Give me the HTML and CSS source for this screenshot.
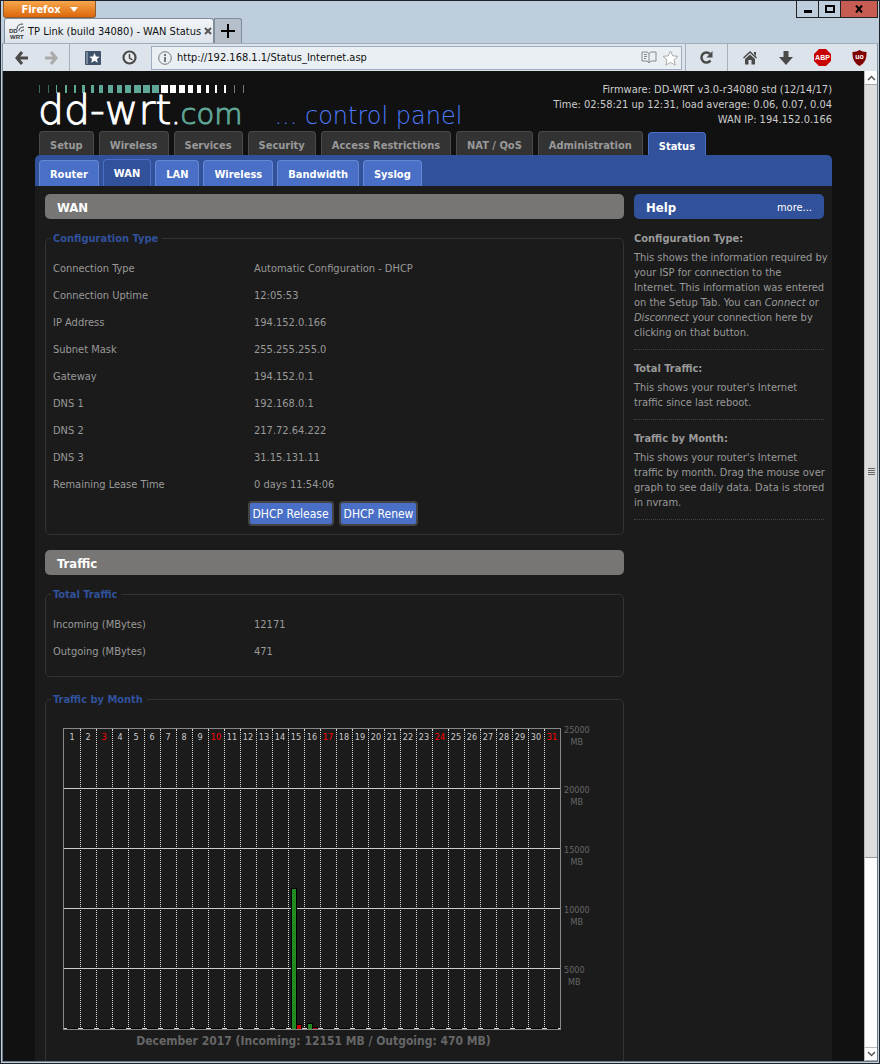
FILE: index.html
```html
<!DOCTYPE html>
<html lang="en">
<head>
    <meta charset="utf-8">
    <title>TP Link (build 34080) - WAN Status</title>
    <link rel="stylesheet" href="styles.css">
</head>
<body>
<div class="window">
    <div class="titlebar">
        <button class="firefox">Firefox <svg width="8" height="5" viewBox="0 0 8 5"><path d="M0 0h8L4 5z" fill="#fff"/></svg></button>
        <div class="controls">
            <button aria-label="Minimize"><svg width="10" height="8"><path d="M1 5h8v3H1z"/></svg></button>
            <button aria-label="Maximize"><svg width="10" height="8"><path d="M1 1h8v6H1z" fill="none" stroke="#000" stroke-width="2"/></svg></button>
            <button class="close" aria-label="Close"><svg width="8" height="8"><path d="M1 .5l6 7M7 .5l-6 7" stroke="#000" stroke-width="2"/></svg></button>
        </div>
    </div>
    <div class="tabs">
        <div class="tab">
            <svg width="16" height="16" viewBox="0 0 16 16"><g font-family="Liberation Sans" font-weight="bold" font-size="6" fill="#333"><text x="0" y="10">DD</text><text x="1" y="16">WRT</text></g><path d="M8 6q0-5 6-5M10 8q0-4 5-4M12 9q0-2 3-2" fill="none" stroke="#444"/></svg>
            <span>TP Link (build 34080) - WAN Status</span>
            <button class="tab-close" aria-label="Close tab"><svg width="8" height="8"><path d="M1 1l6 6M7 1L1 7" stroke="#555" stroke-width="2"/></svg></button>
        </div>
        <button class="new-tab" aria-label="New tab"><svg width="14" height="14"><path d="M7 0v14M0 7h14" stroke="#000" stroke-width="2"/></svg></button>
    </div>
    <div class="toolbar">
        <div class="group">
            <button aria-label="Back"><svg width="14" height="14" viewBox="0 0 14 14"><path d="M7 1L2 7l5 6M2 7h11" fill="none" stroke="#4a4a4a" stroke-width="3"/></svg></button>
            <button aria-label="Forward"><svg width="14" height="14" viewBox="0 0 14 14"><path d="M7 1l5 6-5 6M12 7H1" fill="none" stroke="#aaa" stroke-width="3"/></svg></button>
        </div>
        <div class="group marks">
            <button aria-label="Bookmarks"><svg width="16" height="14" viewBox="0 0 16 14"><rect width="16" height="14" rx="1" fill="#40536a"/><path d="M1 1h2v12H1z" fill="#7b8a9b"/><path d="M9.500 2l1.500 3.400 3.700.3-2.800 2.400.9 3.700-3.300-2-3.300 2 .9-3.700-2.800-2.400 3.700-.3z" fill="#fff"/></svg></button>
            <button aria-label="History"><svg width="15" height="15" viewBox="0 0 15 15"><circle cx="7.500" cy="7.500" r="6" fill="#e6ebef" stroke="#4a4a4a" stroke-width="2.200"/><path d="M7.500 4v4l3 2" fill="none" stroke="#4a4a4a" stroke-width="1.500"/></svg></button>
        </div>
        <div class="urlbar">
            <svg width="14" height="14" viewBox="0 0 14 14"><circle cx="7" cy="7" r="6.300" fill="none" stroke="#777"/><path d="M6 3h2v2H6zM6 6h2v5H6z" fill="#777"/></svg>
            <input type="text" aria-label="Address" value="http://192.168.1.1/Status_Internet.asp">
            <svg width="16" height="13" viewBox="0 0 16 13"><path d="M1 1h5l2 1.500L10 1h5v9h-5l-2 2-2-2H1zM8 2.500V11M3 3.500h3M3 5.500h3M3 7.500h2" fill="none" stroke="#8a8a8a"/></svg>
            <svg width="17" height="16" viewBox="0 0 17 16"><path d="M8.500 1l2.200 4.800 5.300.6-3.900 3.500 1.100 5.200-4.700-2.700-4.700 2.700 1.100-5.200L1 6.400l5.300-.6z" fill="#fff" stroke="#aaa"/></svg>
        </div>
        <div class="group reload">
            <button aria-label="Reload"><svg width="15" height="15" viewBox="0 0 15 15"><path d="M11.500 10.500A5 5 0 1 1 11 4" fill="none" stroke="#4a4a4a" stroke-width="2.500"/><path d="M13.500 1v6.500H7.500z" fill="#4a4a4a"/></svg></button>
        </div>
        <div class="group addons">
            <button aria-label="Home"><svg width="16" height="15" viewBox="0 0 16 15"><path d="M8 1l7 6.500-1 1-6-5.500-6 5.500-1-1zM12 2h2v4l-2-2zM3 9l5-4.500L13 9v5.500H9.500V10h-3v4.500H3z" fill="#4a4a4a"/></svg></button>
            <button aria-label="Downloads"><svg width="14" height="14" viewBox="0 0 14 14"><path d="M4.500 0h5v6H14l-7 8-7-8h4.500z" fill="#4a4a4a"/></svg></button>
            <button aria-label="Adblock Plus"><svg width="17" height="17" viewBox="0 0 17 17"><path d="M5 0h7l5 5v7l-5 5H5l-5-5V5z" fill="#c90000"/><text x="8.500" y="11" text-anchor="middle" font-family="Liberation Sans" font-weight="bold" font-size="7" fill="#fff">ABP</text></svg></button>
            <button aria-label="uBlock"><svg width="15" height="16" viewBox="0 0 15 16"><path d="M7.500 0Q10 2 14.500 2q.6 10-7 14Q-.1 12 .5 2 5 2 7.500 0z" fill="#800000"/><text x="7.500" y="9" text-anchor="middle" font-family="Liberation Sans" font-weight="bold" font-size="7" fill="#fff">uo</text></svg></button>
        </div>
    </div>
    <div class="view">
        <div class="page">
            <div class="wrapper">
                <header class="header">
                    <div class="brand">
                        <svg width="208" height="9" viewBox="0 0 208 9">
                            <path fill="#5fa797" d="M18 0h1v8h-1zM27 0h2v8h-2zM36 0h2v8h-2zM44 0h3v8h-3zM53 0h3v8h-3zM61 0h4v8h-4zM70 0h5v8h-5zM79 0h5v8h-5zM87 0h6v8h-6zM96 0h7v8h-7zM105 0h7v8h-7zM114 0h7v8h-7z"/>
                            <path fill="#3c6b60" d="M1 0h1v8H1zM10 0h1v8h-1z"/>
                            <path fill="#fff" d="M123 0h7v8h-7zM132 0h6v8h-6zM141 0h6v8h-6zM150 0h5v8h-5zM159 0h4v8h-4zM168 0h3v8h-3zM177 0h2v8h-2zM186 0h2v8h-2z"/>
                            <path fill="#777" d="M196 0h1v8h-1zM205 0h1v8h-1z"/>
                        </svg>
                        <div class="brand-name">
                            <h1>dd-wrt<span class="com"><span class="dot">.</span>com</span></h1>
                            <span class="panel">... control panel</span>
                        </div>
                    </div>
                    <div class="info">
                        <div>Firmware: DD-WRT v3.0-r34080 std (12/14/17)</div>
                        <div>Time: 02:58:21 up 12:31, load average: 0.06, 0.07, 0.04</div>
                        <div>WAN IP: 194.152.0.166</div>
                    </div>
                </header>
                <nav class="menu">
                    <a href="#">Setup</a>
                    <a href="#">Wireless</a>
                    <a href="#">Services</a>
                    <a href="#">Security</a>
                    <a href="#">Access Restrictions</a>
                    <a href="#">NAT / QoS</a>
                    <a href="#">Administration</a>
                    <a href="#" class="current">Status</a>
                </nav>
                <nav class="submenu">
                    <a href="#">Router</a>
                    <a href="#" class="current">WAN</a>
                    <a href="#">LAN</a>
                    <a href="#">Wireless</a>
                    <a href="#">Bandwidth</a>
                    <a href="#">Syslog</a>
                </nav>
                <div class="main">
                    <div class="contents">
                        <h2>WAN</h2>
                        <fieldset>
                            <legend>Configuration Type</legend>
                            <table class="settings">
                                <tr><th scope="row">Connection Type</th><td>Automatic Configuration - DHCP</td></tr>
                                <tr><th scope="row">Connection Uptime</th><td>12:05:53</td></tr>
                                <tr><th scope="row">IP Address</th><td>194.152.0.166</td></tr>
                                <tr><th scope="row">Subnet Mask</th><td>255.255.255.0</td></tr>
                                <tr><th scope="row">Gateway</th><td>194.152.0.1</td></tr>
                                <tr><th scope="row">DNS 1</th><td>192.168.0.1</td></tr>
                                <tr><th scope="row">DNS 2</th><td>217.72.64.222</td></tr>
                                <tr><th scope="row">DNS 3</th><td>31.15.131.11</td></tr>
                                <tr><th scope="row">Remaining Lease Time</th><td>0 days 11:54:06</td></tr>
                            </table>
                            <div class="buttons">
                                <button>DHCP Release</button>
                                <button>DHCP Renew</button>
                            </div>
                        </fieldset>
                        <h2>Traffic</h2>
                        <fieldset>
                            <legend>Total Traffic</legend>
                            <table class="settings">
                                <tr><th scope="row">Incoming (MBytes)</th><td>12171</td></tr>
                                <tr><th scope="row">Outgoing (MBytes)</th><td>471</td></tr>
                            </table>
                        </fieldset>
                        <fieldset class="month">
                            <legend>Traffic by Month</legend>
                            <div class="graph">
                                <div class="days" id="days"></div>
                                <ul class="scale">
                                    <li>25000<br>MB</li>
                                    <li>20000<br>MB</li>
                                    <li>15000<br>MB</li>
                                    <li>10000<br>MB</li>
                                    <li>5000<br>MB</li>
                                </ul>
                            </div>
                            <p class="caption">December 2017 (Incoming: 12151 MB / Outgoing: 470 MB)</p>
                        </fieldset>
                    </div>
                    <aside class="help">
                        <h2>Help <a href="#">more...</a></h2>
                        <section>
                            <h3>Configuration Type:</h3>
                            <p>
                                This shows the information required by<br>
                                your ISP for connection to the<br>
                                Internet. This information was entered<br>
                                on the Setup Tab. You can <i>Connect</i> or<br>
                                <i>Disconnect</i> your connection here by<br>
                                clicking on that button.
                            </p>
                        </section>
                        <section>
                            <h3>Total Traffic:</h3>
                            <p>
                                This shows your router's Internet<br>
                                traffic since last reboot.
                            </p>
                        </section>
                        <section>
                            <h3>Traffic by Month:</h3>
                            <p>
                                This shows your router's Internet<br>
                                traffic by month. Drag the mouse over<br>
                                graph to see daily data. Data is stored<br>
                                in nvram.
                            </p>
                        </section>
                    </aside>
                </div>
            </div>
        </div>
        <div class="scrollbar">
            <button aria-label="Scroll up"><svg width="9" height="6"><path d="M1 5l3.500-3.500L8 5" fill="none" stroke="#555" stroke-width="1.500"/></svg></button>
            <div class="thumb"><span></span></div>
            <div class="track"></div>
            <button aria-label="Scroll down"><svg width="9" height="6"><path d="M1 1l3.500 3.500L8 1" fill="none" stroke="#555" stroke-width="1.500"/></svg></button>
        </div>
    </div>
</div>

<script>
    const scaleMax = 25000;
    // MB per day as [incoming, outgoing], days not listed are empty
    const traffic = { 15: [11700, 350], 16: [451, 120] };
    const days = document.getElementById('days');

    for (let d = 1; d <= 31; d++) {
        const [incoming, outgoing] = traffic[d] || [0, 0];
        const col = document.createElement('div');
        // sundays are printed in red
        col.className = d % 7 === 3 ? 'day sunday' : 'day';
        col.innerHTML = '<span>' + d + '</span>' +
            '<div class="bars">' +
            '<div class="bar in" style="height:' + (incoming / scaleMax * 100) + '%"></div>' +
            '<div class="bar out" style="height:' + (outgoing / scaleMax * 100) + '%"></div>' +
            '</div>';
        days.appendChild(col);
    }
</script>
</body>
</html>
```
FILE: styles.css
```css
* {
    box-sizing: border-box;
}

body {
    margin: 0;
    font-family: "DejaVu Sans Condensed", "DejaVu Sans", sans-serif;
    font-size: 11px;
    line-height: 15px;
    color: #999;
    background: #111;
}

button {
    font-family: inherit;
    padding: 0;
    border: 0;
    background: none;
}

svg {
    display: block;
    flex: none;
}

a {
    color: inherit;
    text-decoration: none;
}

/* browser window */
.window {
    display: flex;
    flex-direction: column;
    height: 100vh;
    border: 1px solid #1b222a;
    padding: 0 1px 1px;
    background: #bfcedd;
}

.titlebar {
    display: flex;
    justify-content: space-between;
    height: 17px;
    padding-left: 1px;
}

.firefox {
    display: flex;
    align-items: center;
    justify-content: center;
    gap: 9px;
    width: 93px;
    border: 1px solid #8c5a2c;
    border-top: 0;
    border-radius: 0 0 3px 3px;
    background: linear-gradient(#f6a64c, #dc670b);
    color: #fff;
    font-size: 11px;
    font-weight: bold;
}

.controls {
    display: flex;
    border: 1px solid #222;
    border-top: 0;
}

.controls button {
    display: flex;
    align-items: center;
    justify-content: center;
    width: 22px;
    border-right: 1px solid #222;
}

.controls .close {
    width: 36px;
    border: 0;
    background: #c75c52;
}

.tabs {
    display: flex;
    height: 25px;
    padding-left: 2px;
}

.tab {
    display: flex;
    align-items: center;
    gap: 3px;
    width: 210px;
    padding: 0 4px;
    border: 1px solid #7e8d9c;
    border-bottom: 0;
    border-radius: 3px 3px 0 0;
    background: linear-gradient(#f2f5f7, #dce3ea);
    color: #111;
    white-space: nowrap;
}

.tab-close {
    margin-left: auto;
}

.new-tab {
    display: flex;
    align-items: center;
    justify-content: center;
    width: 28px;
    border: 1px solid #7e8d9c;
    border-bottom: 0;
    border-radius: 0 3px 0 0;
    background: #b5bfc9;
}

.toolbar {
    display: flex;
    align-items: center;
    height: 28px;
    border: 1px solid #8494a4;
    border-top-color: #a0adba;
    border-bottom: 0;
    background: #dce3ea;
}

.group {
    display: flex;
    align-items: center;
    justify-content: space-around;
    width: 67px;
    height: 100%;
    padding: 0 4px;
    border-right: 1px solid #a5b0bb;
}

.marks {
    width: 81px;
    border: 0;
}

.urlbar {
    display: flex;
    align-items: center;
    gap: 5px;
    flex: 1;
    height: 24px;
    padding: 0 2px 0 6px;
    border: 1px solid #9fadc0;
    background: #e9eff3;
}

.urlbar input {
    flex: 1;
    min-width: 0;
    padding: 0;
    border: 0;
    outline: 0;
    background: none;
    font: 11px "DejaVu Sans Condensed", "DejaVu Sans", sans-serif;
    color: #111;
}

.reload {
    width: 43px;
    margin-left: 3px;
    border-left: 1px solid #a5b0bb;
}

.addons {
    width: 149px;
    padding: 0 0 0 4px;
    border: 0;
}

.view {
    display: flex;
    flex: 1;
    min-height: 0;
    border: 1px solid #6c7c8c;
    border-top: 0;
    background: #111;
}

.page {
    flex: 1;
    display: flex;
    overflow: hidden;
}

.scrollbar {
    display: flex;
    flex-direction: column;
    width: 13px;
    border-left: 1px solid #bbb;
    background: #fff;
}

.scrollbar button {
    display: flex;
    align-items: center;
    justify-content: center;
    height: 14px;
    border-bottom: 1px solid #aaa;
}

.scrollbar button:last-child {
    border-top: 1px solid #bbb;
}

.thumb {
    display: flex;
    align-items: center;
    justify-content: center;
    flex: 773;
    border-bottom: 1px solid #999;
    background: #ddd;
}

.thumb span {
    width: 7px;
    height: 7px;
    background: repeating-linear-gradient(#666 0 1px, transparent 1px 2px);
}

.track {
    flex: 189;
}

/* router page */
.wrapper {
    width: 797px;
    max-width: 100%;
    margin: 0 auto;
}

.header {
    display: flex;
    justify-content: space-between;
    height: 60px;
    padding-top: 11px;
    color: #ccc;
}

.brand {
    padding: 3px 0 0 3px;
}

.brand-name {
    display: flex;
    align-items: baseline;
    gap: 32px;
    height: 33px;
    line-height: 33px;
    font-family: "DejaVu Sans Light", "DejaVu Sans", sans-serif;
    font-weight: 200;
    white-space: nowrap;
}

h1 {
    margin: 0;
    font-size: 41px;
    font-weight: 200;
    color: #fff;
    -webkit-text-stroke: 1px #fff;
}

.com {
    font-size: 29px;
    color: #5fa797;
    -webkit-text-stroke: 1px #5fa797;
}

.dot {
    color: #fff;
    -webkit-text-stroke: 1px #fff;
}

.panel {
    font-size: 24px;
    color: #4d7dff;
}

.info {
    text-align: right;
    white-space: nowrap;
}

.menu,
.submenu {
    display: flex;
    align-items: flex-end;
    gap: 5px;
    padding: 0 4px;
    font-weight: bold;
    white-space: nowrap;
}

.menu a {
    height: 24px;
    padding: 6px 10px 0;
    border: 1px solid #4a4a4a;
    border-bottom: 0;
    border-radius: 4px 4px 0 0;
    background: #333;
}

.menu .current {
    height: 23px;
    background: #31519b;
    border-color: #4a6fc6;
    color: #fff;
}

.submenu {
    gap: 4px;
    height: 31px;
    border-radius: 5px 5px 0 0;
    background: #31519b;
    color: #fff;
}

.submenu a {
    height: 26px;
    padding: 6px 10px 0;
    border: 1px solid #6687d2;
    border-bottom: 0;
    border-radius: 4px 4px 0 0;
    background: #4a6fc6;
}

.submenu .current {
    height: 27px;
    background: #31519b;
    border-color: #4a6fc6;
}

.main {
    display: flex;
    gap: 10px;
    padding: 8px 8px 0 10px;
    background: #1b1b1b;
}

.contents {
    flex: 1;
    min-width: 0;
}

h2 {
    display: flex;
    align-items: center;
    justify-content: space-between;
    height: 25px;
    margin: 0 0 12px;
    padding: 1px 12px 0;
    border-radius: 5px;
    background: #787674;
    color: #fff;
    font-size: 13px;
}

fieldset {
    min-width: 0;
    margin: 0 0 15px;
    padding: 9px 6px 8px;
    border: 1px solid #333;
    border-radius: 5px;
}

legend {
    padding: 0 4px 0 2px;
    margin-left: -1px;
    font-weight: bold;
    color: #31519b;
}

.settings {
    width: 100%;
    border-collapse: collapse;
}

.settings:last-child {
    margin-bottom: 3px;
}

.settings th,
.settings td {
    height: 27px;
    padding: 0 1px;
    font-weight: normal;
    text-align: left;
}

.settings th {
    width: 201px;
}

.buttons {
    display: flex;
    justify-content: center;
    gap: 5px;
    padding: 3px 3px 0 0;
}

.buttons button {
    height: 25px;
    padding: 0 3px;
    border: 2px solid #444;
    border-radius: 4px;
    background: #4a6fc6;
    color: #fff;
    font-size: 12px;
}

.month {
    margin-bottom: 0;
}

.graph {
    display: flex;
    gap: 3px;
    padding: 12px 0 0 11px;
}

.days {
    display: grid;
    grid-template-columns: repeat(31, 16px);
    height: 302px;
    border: 1px solid #888;
    background: repeating-linear-gradient(transparent 0 59px, #ccc 59px 60px);
}

.day {
    position: relative;
    padding-right: 1px;
    border-left: 1px dotted #ddd;
    font-size: 9px;
    line-height: 17px;
    text-align: center;
    color: #ccc;
}

.day:first-child {
    border-left-color: transparent;
}

.sunday {
    color: #f00;
}

/* lies over the day number and the grid lines */
.bars {
    position: absolute;
    inset: 0 2px;
    display: flex;
    align-items: flex-end;
}

.bar {
    box-sizing: content-box;
    width: 4px;
    border: 1px solid #000;
    border-bottom: 0;
}

.in {
    background: #228b22;
}

.out {
    border-left: 0;
    background: #c00;
}

.scale {
    margin: -4px 0 0;
    padding: 0;
    list-style: none;
    font-size: 9px;
    line-height: 12px;
    text-align: center;
    color: #666;
}

.scale li {
    width: fit-content;
    height: 60px;
}

.caption {
    margin: 4px 0 20px;
    padding-right: 42px;
    font-size: 12px;
    font-weight: bold;
    text-align: center;
    color: #666;
}

.help {
    width: 190px;
}

.help h2 {
    background: #31519b;
}

.help h2 a {
    font-size: 11px;
    font-weight: normal;
}

.help section {
    margin-bottom: 11px;
    padding-bottom: 9px;
    border-bottom: 1px dotted #444;
}

.help h3 {
    margin: 0 0 4px;
    font-size: 11px;
}

.help p {
    margin: 0;
    white-space: nowrap;
}
```
